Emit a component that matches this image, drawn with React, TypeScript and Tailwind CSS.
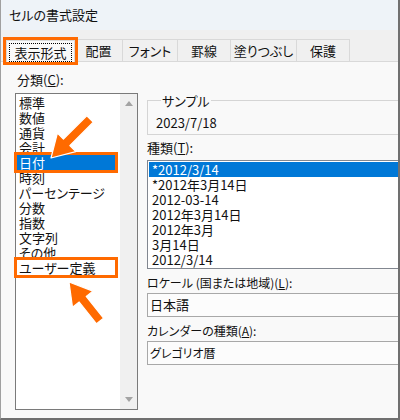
import React from 'react';

const categories = [
  '標準',
  '数値',
  '通貨',
  '会計',
  '日付',
  '時刻',
  'パーセンテージ',
  '分数',
  '指数',
  '文字列',
  'その他',
  'ユーザー定義',
];

const types = [
  '*2012/3/14',
  '*2012年3月14日',
  '2012-03-14',
  '2012年3月14日',
  '2012年3月',
  '3月14日',
  '2012/3/14',
];

const tabs = [
  { label: '配置', w: 'w-[48px]' },
  { label: 'フォント', w: 'w-[55px]' },
  { label: '罫線', w: 'w-[53px]' },
  { label: '塗りつぶし', w: 'w-[66px]' },
  { label: '保護', w: 'w-[53px]' },
];

export default function App() {
  return (
    <div className="relative w-[400px] h-[420px] overflow-hidden bg-[#f9f9f9] border-l border-l-[#a0a0a0] border-r-2 border-r-[#707070] border-b-2 border-b-[#707070] text-[12px] text-[#111] font-['Noto_Sans_CJK_JP',sans-serif] [font-feature-settings:'palt']">
      {/* タイトルバー */}
      <div className="h-[30px] bg-[#eef3f8] pl-[8px] flex items-center text-[13px]">
        セルの書式設定
      </div>

      {/* タブ */}
      <div className="h-[32px] bg-[#f0f0f0] border-b border-[#d9d9d9] flex items-end pl-[5px] whitespace-nowrap text-[13px]">
        <div className="relative w-[69px] h-[22px] -mb-px bg-[#f9f9f9] border border-b-0 border-[#d9d9d9] outline-[3px] outline-solid outline-[#ff6a00] z-10 flex items-center">
          <span className="ml-[2px] w-[63px] h-[19px] mt-[1px] border border-dotted border-black flex items-center justify-center leading-none">
            表示形式
          </span>
        </div>
        {tabs.map((t) => (
          <div
            key={t.label}
            className={`${t.w} h-[22px] border-t border-r border-[#d9d9d9] flex items-center justify-center leading-none`}
          >
            {t.label}
          </div>
        ))}
      </div>

      {/* 本体 */}
      <div className="flex pl-[14px] pt-[8px]">
        <div className="w-[123px] shrink-0">
          <div className="h-[20px] leading-[20px] mb-[3px] pl-[2px] text-[13px]">
            分類(<span className="underline">C</span>):
          </div>
          <div className="h-[317px] border border-[#7a7a7a] bg-white flex">
            <div className="flex-1 pt-px text-[13px]">
              {categories.map((c, i) => (
                <div
                  key={c}
                  className={`ml-px w-[98px] h-[15px] leading-[15px] pl-[2px] whitespace-nowrap ${
                    i === 4 ? 'bg-[#0078d7] text-white' : ''
                  } ${
                    i === 4 || i === 11
                      ? 'outline-[3px] outline-solid outline-[#ff6a00]'
                      : ''
                  }`}
                >
                  {c}
                </div>
              ))}
            </div>
            <div className="w-[17px] bg-[#f0f0f0] flex flex-col items-center justify-between py-[7px]">
              <div className="w-0 h-0 border-l-[4px] border-r-[4px] border-b-[5px] border-l-transparent border-r-transparent border-b-[#a3a3a3]" />
              <div className="w-0 h-0 border-l-[4px] border-r-[4px] border-t-[5px] border-l-transparent border-r-transparent border-t-[#a3a3a3]" />
            </div>
          </div>
        </div>

        <div className="ml-[9px] w-[300px] shrink-0 mt-[23px] text-[13px]">
          <fieldset className="border border-[#d5d5d5] pl-[8px] pt-[7px] pb-[3px]">
            <legend className="ml-[5px] px-px leading-[15px]">サンプル</legend>
            <div className="leading-[16px]">2023/7/18</div>
          </fieldset>

          <div className="mt-[5px] h-[16px] leading-[16px] mb-[4px]">
            種類(<span className="underline">T</span>):
          </div>
          <div className="h-[109px] border border-[#828790] bg-white pt-px">
            {types.map((t, i) => (
              <div
                key={t}
                className={`ml-px h-[15px] leading-[15px] pl-[3px] ${
                  i === 0 ? 'bg-[#0078d7] text-white' : ''
                }`}
              >
                {t}
              </div>
            ))}
          </div>

          <div className="mt-[6px] h-[16px] leading-[16px] text-[12px]">
            ロケール (国または地域)(<span className="underline">L</span>):
          </div>
          <div className="mt-[2px] h-[24px] border border-[#a8a8a8] bg-[#fcfcfc] flex items-center pl-[2px]">
            日本語
          </div>

          <div className="mt-[6px] h-[16px] leading-[16px] text-[12px]">
            カレンダーの種類(<span className="underline">A</span>):
          </div>
          <div className="mt-[2px] h-[24px] border border-[#a8a8a8] bg-[#fcfcfc] flex items-center pl-[2px] text-[12px]">
            グレゴリオ暦
          </div>
        </div>
      </div>

      {/* 注釈の矢印 */}
      <svg
        className="absolute left-0 top-0 pointer-events-none z-20"
        width="400"
        height="420"
        viewBox="0 0 400 420"
      >
        <polygon
          points="50,158 74.8,151.6 68.8,145.6 92.2,122.2 85.8,115.8 62.4,139.2 56.4,133.2"
          fill="#ff6a00"
          stroke="#ffffff"
          strokeWidth="1.2"
          strokeLinejoin="round"
        />
        <polygon
          points="68,282 91.9,291.1 85.2,296.4 102.5,318.2 95.5,323.8 78.2,302 71.5,307.3"
          fill="#ff6a00"
          stroke="#ffffff"
          strokeWidth="1.2"
          strokeLinejoin="round"
        />
      </svg>
    </div>
  );
}
